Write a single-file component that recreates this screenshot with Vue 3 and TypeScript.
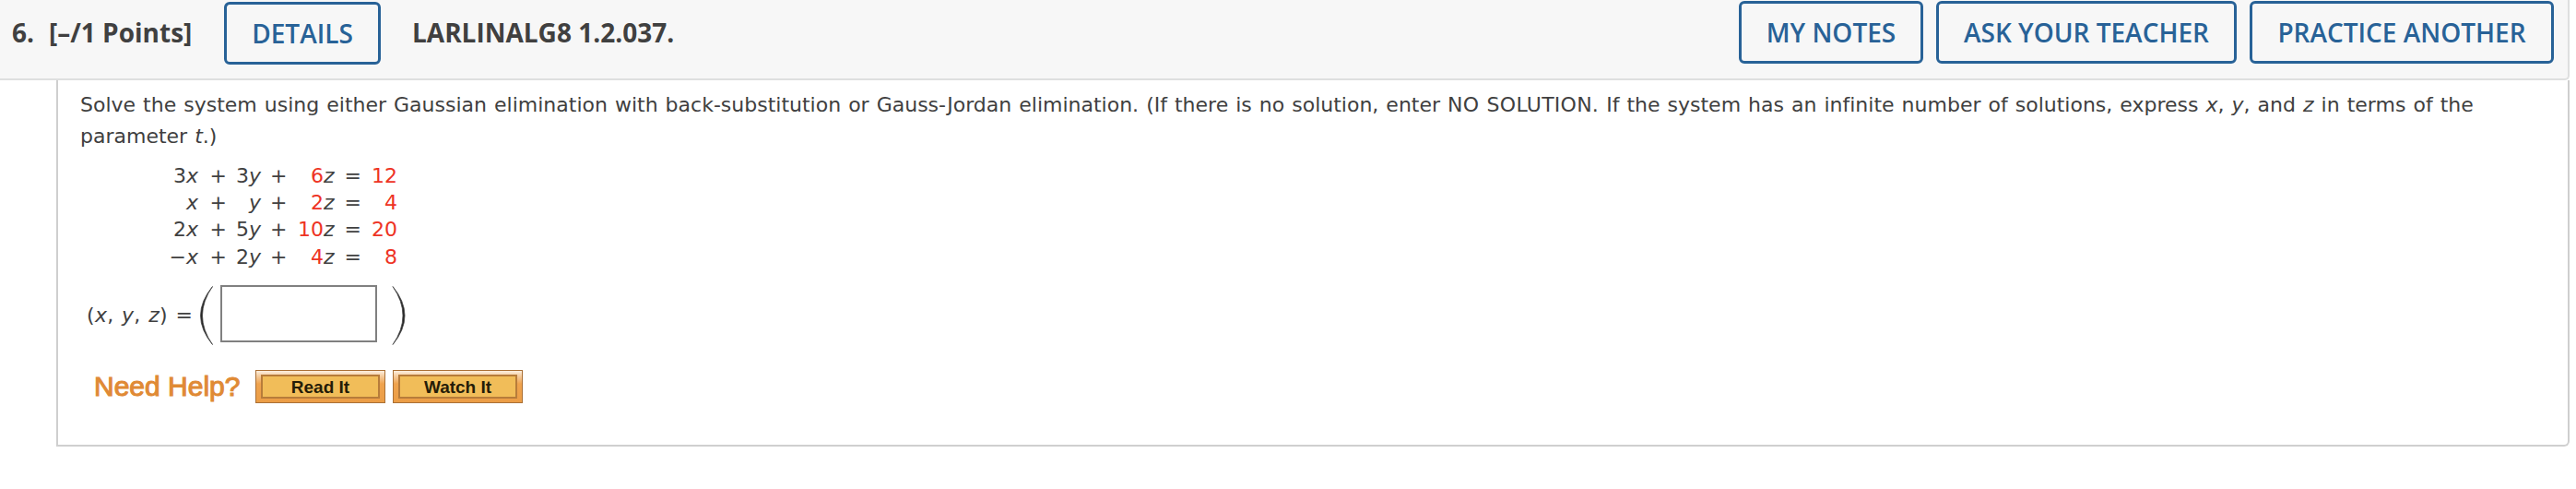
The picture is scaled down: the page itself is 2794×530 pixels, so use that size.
<script setup lang="ts">
interface Equation {
  x: string
  y: string
  z: string
  rhs: string
}

const actions: string[] = ['MY NOTES', 'ASK YOUR TEACHER', 'PRACTICE ANOTHER']
const equations: Equation[] = [
  { x: '3', y: '3', z: '6', rhs: '12' },
  { x: '', y: '', z: '2', rhs: '4' },
  { x: '2', y: '5', z: '10', rhs: '20' },
  { x: '−', y: '2', z: '4', rhs: '8' },
]
const helpLinks: string[] = ['Read It', 'Watch It']
</script>

<template>
  <main class="page">
    <header class="header">
      <span class="number">6.</span>
      <span class="points">[–/1 Points]</span>
      <button class="btn details">DETAILS</button>
      <span class="code">LARLINALG8 1.2.037.</span>
      <nav class="actions">
        <button v-for="(a, i) in actions" :key="a" class="btn" :class="'action-' + i">{{ a }}</button>
      </nav>
    </header>
    <section class="panel">
      <p class="prompt">
        <span class="line first">Solve the system using either Gaussian elimination with back-substitution or Gauss-Jordan elimination. (If there is no solution, enter <span class="caps">NO SOLUTION.</span> If the system has an infinite number of solutions, express <i>x</i>, <i>y</i>, and <i>z</i> in terms of the</span>
        <span class="line">parameter <i>t</i>.)</span>
      </p>
      <div class="system">
        <div v-for="(e, i) in equations" :key="i" class="equation">
          <span>{{ e.x }}<i>x</i></span>
          <span>+</span>
          <span>{{ e.y }}<i>y</i></span>
          <span>+</span>
          <span><b>{{ e.z }}</b><i>z</i></span>
          <span>=</span>
          <span><b>{{ e.rhs }}</b></span>
        </div>
      </div>
      <div class="answer">
        <span class="tuple">(<i>x</i>, <i>y</i>, <i>z</i>) =</span>
        <svg class="paren" width="16" height="66" viewBox="0 0 16 66"><path d="M14.500 1.500Q-11.500 33 14.500 64.500Q-7.500 33 14.500 1.500Z" /></svg>
        <input class="field" type="text" aria-label="Answer" />
        <svg class="paren right" width="16" height="66" viewBox="0 0 16 66"><path d="M1 1.500Q27 33 1 64.500Q23 33 1 1.500Z" /></svg>
      </div>
      <div class="help">
        <span class="help-label">Need Help?</span>
        <button v-for="h in helpLinks" :key="h" class="help-btn"><span>{{ h }}</span></button>
      </div>
    </section>
  </main>
</template>

<style>
body {
  margin: 0;
  background: #fff;
}
</style>

<style scoped>
.page {
  width: 2794px;
  height: 530px;
  overflow: hidden;
  color: #404040;
  font-family: Verdana, "DejaVu Sans", sans-serif;
  font-variant-ligatures: none;
}
.header {
  box-sizing: border-box;
  display: flex;
  align-items: flex-start;
  width: 2787px;
  height: 87px;
  padding: 1px 15px 0 13px;
  background: #f7f7f7;
  border-right: 2px solid #dedfdf;
  border-bottom: 2px solid #dedfdf;
  border-bottom-right-radius: 5px;
  font: 700 28px/68px "Open Sans", sans-serif;
  white-space: nowrap;
}
.number {
  width: 40px;
}
.points {
  width: 190px;
}
.btn {
  box-sizing: border-box;
  height: 68px;
  padding: 0;
  background: transparent;
  border: 3px solid #286297;
  border-radius: 6px;
  color: #286297;
  font: 600 28px/61px "Open Sans", sans-serif;
  text-align: center;
  white-space: nowrap;
}
.details {
  width: 170px;
  margin: 1px 34px 0 0;
}
.actions {
  display: flex;
  gap: 14px;
  margin-left: auto;
}
.action-0 {
  width: 200px;
}
.action-1 {
  width: 326px;
}
.action-2 {
  width: 330px;
}
.panel {
  box-sizing: border-box;
  width: 2726px;
  height: 397px;
  margin-left: 61px;
  padding: 10px 0 0 24px;
  border: 2px solid #cfcfcf;
  border-top: 0;
  border-radius: 0 0 6px 0;
  font-size: 22px;
}
.prompt {
  margin: 0;
  line-height: 34px;
  word-spacing: 1.03px;
}
.caps {
  letter-spacing: 0.25px;
}
.line {
  display: block;
  white-space: nowrap;
}
.system {
  margin: 11px 0 0 92px;
}
.equation {
  display: grid;
  grid-template-columns: 36px 31px 37px 28.5px 51px 29.5px 39px;
  line-height: 29.2px;
  text-align: right;
  white-space: nowrap;
}
.equation b {
  color: #ee3324;
  font-weight: 400;
}
.answer {
  display: flex;
  align-items: center;
  height: 66px;
  margin: 16px 0 0 7px;
}
.tuple {
  width: 122px;
  white-space: nowrap;
  letter-spacing: 0.3px;
  word-spacing: 1.2px;
}
.paren {
  fill: #222;
  stroke: #444;
  stroke-width: 0.8;
  stroke-linejoin: bevel;
}
.field {
  box-sizing: border-box;
  width: 170px;
  height: 62px;
  margin: 0 16px 4px 7px;
  border: 2px solid #808080;
  background: #fff;
}
.help {
  display: flex;
  align-items: flex-start;
  margin: 26px 0 0 15px;
}
.help-label {
  width: 175px;
  color: #e08a35;
  font: 30px/35px "Liberation Sans", Arial, sans-serif;
  -webkit-text-stroke: 1.1px #e08a35;
}
.help-btn {
  box-sizing: border-box;
  width: 141px;
  height: 36px;
  margin-right: 8px;
  padding: 4px 5px;
  background: linear-gradient(#fdf0e0 0, #f5cfa5 5px, #efa34e 14px, #eb9d46 100%);
  border: 1.5px solid #aa7036;
  color: #251c08;
  font: 700 19px/23px "Liberation Sans", Arial, sans-serif;
}
.help-btn span {
  box-sizing: border-box;
  display: block;
  height: 26px;
  background: #f1bd59;
  border: 2px solid #b77c3a;
}
</style>
